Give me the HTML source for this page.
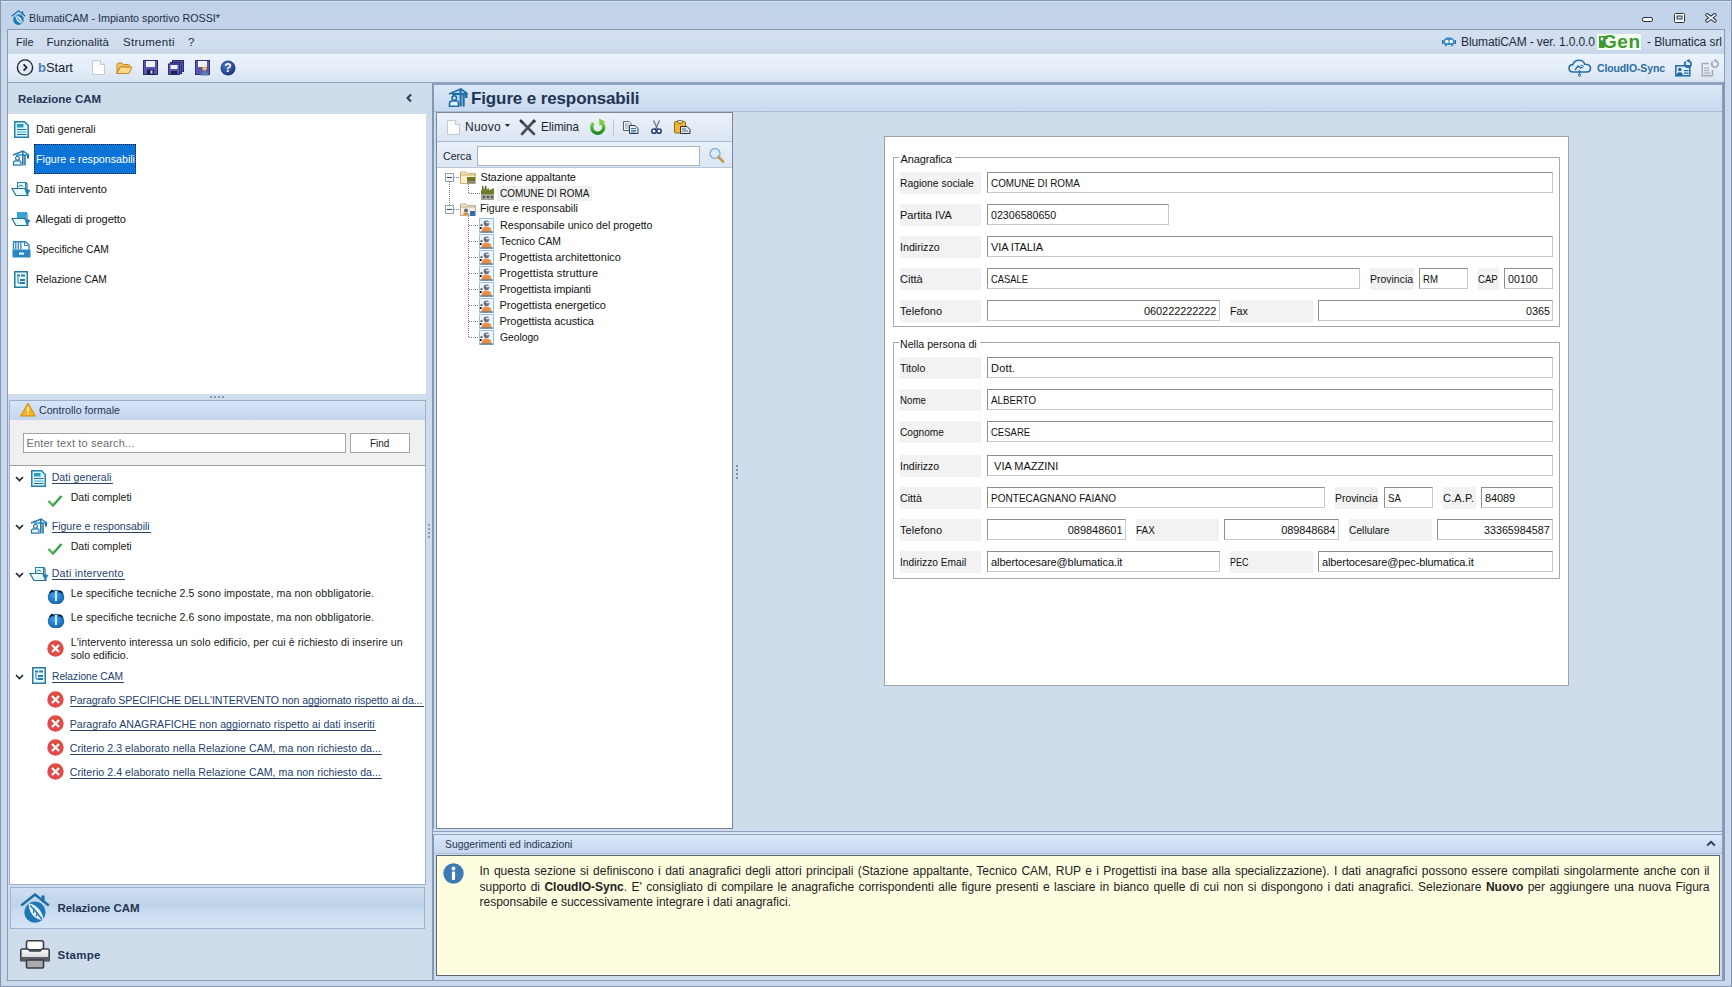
<!DOCTYPE html>
<html><head><meta charset="utf-8">
<style>
*{margin:0;padding:0;box-sizing:border-box}
html,body{width:1732px;height:987px;overflow:hidden;font-family:"Liberation Sans",sans-serif;font-size:11px;color:#000;background:#c8d7eb}
.a{position:absolute}
.t{position:absolute;white-space:pre}
</style></head><body>
<div class="a" style="left:0px;top:0px;width:1732px;height:987px;background:linear-gradient(#c0d2e9,#c3d4ea 28px,#c9d8ec 40px,#c9d8ec);border:1px solid #8595ab"></div>
<div class="a" style="left:1px;top:1px;width:1730px;height:1px;background:#dce6f2"></div>
<div class="a" style="left:7px;top:29px;width:1718px;height:952px;background:#cfdcec;border:1px solid #8a9bb3"></div>
<div class="a" style="left:8px;top:30px;width:1716px;height:24px;background:linear-gradient(#d4e0f0,#d0ddee 75%,#c9d7ea 80%,#cbd9eb)"></div>
<div class="a" style="left:8px;top:54px;width:1716px;height:28px;background:linear-gradient(#ebf3fd,#e4edf8 50%,#d9e4f2)"></div>
<div class="a" style="left:8px;top:82px;width:1716px;height:1px;background:#8ea1bb"></div>
<div class="t" style="left:29.0px;top:12.6px;font-size:11.5px;line-height:11.5px;color:#1f2d40;transform:scaleX(0.9310);transform-origin:0 0;">BlumatiCAM - Impianto sportivo ROSSI*</div>
<svg class="a" style="left:1640px;top:12px" width="16" height="14" viewBox="0 0 16 14"><rect x="2.5" y="5.5" width="10" height="4" rx="1.5" fill="#fff" stroke="#2a3444" stroke-width="1"/></svg>
<svg class="a" style="left:1672px;top:11px" width="16" height="14" viewBox="0 0 16 14"><rect x="2.5" y="2.5" width="10" height="9" rx="1" fill="#fff" stroke="#2a3444" stroke-width="1"/><rect x="5" y="5" width="5" height="3" fill="#cfdcec" stroke="#2a3444" stroke-width="1"/></svg>
<svg class="a" style="left:1703px;top:11px" width="16" height="14" viewBox="0 0 16 14"><path d="M4 3.8 L11.8 9.8 M11.8 3.8 L4 9.8" stroke="#2a3444" stroke-width="3.6" stroke-linecap="round"/><path d="M4 3.8 L11.8 9.8 M11.8 3.8 L4 9.8" stroke="#fff" stroke-width="1.6" stroke-linecap="round"/></svg>
<div class="t" style="left:15.5px;top:36.5px;font-size:11.5px;line-height:11.5px;color:#1e2b3c;transform:scaleX(0.9444);transform-origin:0 0;">File</div>
<div class="t" style="left:46.5px;top:36.5px;font-size:11.5px;line-height:11.5px;color:#1e2b3c;letter-spacing:0.044px;">Funzionalità</div>
<div class="t" style="left:123.0px;top:36.5px;font-size:11.5px;line-height:11.5px;color:#1e2b3c;letter-spacing:0.285px;">Strumenti</div>
<div class="t" style="left:188.0px;top:36.5px;font-size:11.5px;line-height:11.5px;color:#1e2b3c;">?</div>
<div class="t" style="left:1461.0px;top:36.3px;font-size:12px;line-height:12px;color:#1e2b3c;letter-spacing:-0.113px;">BlumatiCAM - ver. 1.0.0.0</div>
<div class="t" style="left:1647.0px;top:36.3px;font-size:12px;line-height:12px;color:#1e2b3c;letter-spacing:-0.073px;">- Blumatica srl</div>
<div class="a" style="left:1597px;top:34px;width:44px;height:16px;background:#f4fcf0"></div>
<svg class="a" style="left:1598px;top:35px" width="10" height="14" viewBox="0 0 10 14"><path d="M1 1 H9.5 V4 H6.5 V13 H1 Z" fill="#3c9a30"/><circle cx="4.2" cy="3.9" r="1.7" fill="#f4fcf0"/></svg>
<div class="t" style="left:1602.0px;top:32.3px;font-size:19px;line-height:19px;color:#3c9a30;font-weight:bold;letter-spacing:0.523px;">Gen</div>
<div class="t" style="left:38.0px;top:61.3px;font-size:13px;line-height:13px;color:#4a7fb5;font-weight:bold;">b</div>
<div class="t" style="left:46.0px;top:61.3px;font-size:13px;line-height:13px;color:#1c2430;letter-spacing:-0.117px;">Start</div>
<div class="t" style="left:1597.0px;top:63.0px;font-size:10.5px;line-height:10.5px;color:#2d6da3;font-weight:bold;letter-spacing:-0.129px;">CloudIO-Sync</div>
<div class="a" style="left:8px;top:83px;width:418px;height:31px;background:#cfdcec"></div>
<div class="t" style="left:18.0px;top:93.5px;font-size:11.5px;line-height:11.5px;color:#1f3553;font-weight:bold;">Relazione CAM</div>
<svg class="a" style="left:404px;top:93px" width="10" height="10" viewBox="0 0 10 10"><path d="M7 1.5 L3.5 5 L7 8.5" fill="none" stroke="#2a3a50" stroke-width="2"/></svg>
<div class="a" style="left:8px;top:114px;width:418px;height:280px;background:#fff"></div>
<div class="t" style="left:35.5px;top:123.8px;font-size:11px;line-height:11px;color:#111;transform:scaleX(0.9649);transform-origin:0 0;">Dati generali</div>
<div class="a" style="left:34px;top:144px;width:102px;height:30px;background:#0b74d6;border:1px dotted #04203f"></div>
<div class="t" style="left:35.5px;top:153.8px;font-size:11px;line-height:11px;color:#fff;transform:scaleX(0.9694);transform-origin:0 0;">Figure e responsabili</div>
<div class="t" style="left:35.5px;top:183.8px;font-size:11px;line-height:11px;color:#111;letter-spacing:0.033px;">Dati intervento</div>
<div class="t" style="left:35.5px;top:213.8px;font-size:11px;line-height:11px;color:#111;letter-spacing:-0.038px;">Allegati di progetto</div>
<div class="t" style="left:35.5px;top:243.8px;font-size:11px;line-height:11px;color:#111;transform:scaleX(0.9314);transform-origin:0 0;">Specifiche CAM</div>
<div class="t" style="left:35.5px;top:273.8px;font-size:11px;line-height:11px;color:#111;transform:scaleX(0.9264);transform-origin:0 0;">Relazione CAM</div>
<div class="a" style="left:210px;top:396px;width:2px;height:2px;background:#8a9ab0"></div>
<div class="a" style="left:214px;top:396px;width:2px;height:2px;background:#8a9ab0"></div>
<div class="a" style="left:218px;top:396px;width:2px;height:2px;background:#8a9ab0"></div>
<div class="a" style="left:222px;top:396px;width:2px;height:2px;background:#8a9ab0"></div>
<div class="a" style="left:9px;top:400px;width:417px;height:485px;background:#fff;border:1px solid #9bb0ca"></div>
<div class="a" style="left:10px;top:401px;width:415px;height:19px;background:linear-gradient(#d7e5f7,#c3d5ed)"></div>
<div class="t" style="left:39.0px;top:404.6px;font-size:11.5px;line-height:11.5px;color:#1f3553;transform:scaleX(0.9249);transform-origin:0 0;">Controllo formale</div>
<div class="a" style="left:10px;top:420px;width:415px;height:45px;background:#f0f0f0"></div>
<div class="a" style="left:10px;top:465px;width:415px;height:1px;background:#a0a0a0"></div>
<div class="a" style="left:23px;top:433px;width:323px;height:20px;background:#fff;border:1px solid #a5a5a5"></div>
<div class="t" style="left:26.5px;top:437.8px;font-size:11px;line-height:11px;color:#6d6d6d;letter-spacing:0.156px;">Enter text to search...</div>
<div class="a" style="left:350px;top:433px;width:60px;height:20px;background:#fff;border:1px solid #a5a5a5"></div>
<div class="t" style="left:369.7px;top:437.8px;font-size:11px;line-height:11px;color:#222;transform:scaleX(0.9016);transform-origin:0 0;">Find</div>
<div class="t" style="left:51.7px;top:472.0px;font-size:10.6px;line-height:10.6px;color:#253f6e;letter-spacing:0.018px;">Dati generali</div>
<div class="a" style="left:52px;top:482.5px;width:61px;height:1px;background:#2a4268"></div>
<div class="t" style="left:70.7px;top:492.0px;font-size:10.6px;line-height:10.6px;color:#1a1a1a;letter-spacing:-0.020px;">Dati completi</div>
<div class="t" style="left:51.7px;top:521.0px;font-size:10.6px;line-height:10.6px;color:#253f6e;letter-spacing:-0.017px;">Figure e responsabili</div>
<div class="a" style="left:52px;top:531.5px;width:99px;height:1px;background:#2a4268"></div>
<div class="t" style="left:70.7px;top:541.0px;font-size:10.6px;line-height:10.6px;color:#1a1a1a;letter-spacing:-0.020px;">Dati completi</div>
<div class="t" style="left:51.7px;top:568.0px;font-size:10.6px;line-height:10.6px;color:#253f6e;letter-spacing:0.242px;">Dati intervento</div>
<div class="a" style="left:52px;top:578.5px;width:73px;height:1px;background:#2a4268"></div>
<div class="t" style="left:70.7px;top:588.0px;font-size:10.6px;line-height:10.6px;color:#1a1a1a;letter-spacing:0.076px;">Le specifiche tecniche 2.5 sono impostate, ma non obbligatorie.</div>
<div class="t" style="left:70.7px;top:612.0px;font-size:10.6px;line-height:10.6px;color:#1a1a1a;letter-spacing:0.076px;">Le specifiche tecniche 2.6 sono impostate, ma non obbligatorie.</div>
<div class="t" style="left:70.7px;top:637.0px;font-size:10.6px;line-height:10.6px;color:#1a1a1a;letter-spacing:0.082px;">L&#x27;intervento interessa un solo edificio, per cui è richiesto di inserire un</div>
<div class="t" style="left:70.7px;top:650.0px;font-size:10.6px;line-height:10.6px;color:#1a1a1a;letter-spacing:-0.023px;">solo edificio.</div>
<div class="t" style="left:51.7px;top:671.0px;font-size:10.6px;line-height:10.6px;color:#253f6e;transform:scaleX(0.9646);transform-origin:0 0;">Relazione CAM</div>
<div class="a" style="left:52px;top:681.5px;width:72px;height:1px;background:#2a4268"></div>
<div class="t" style="left:69.7px;top:695.0px;font-size:10.6px;line-height:10.6px;color:#253f6e;letter-spacing:-0.085px;">Paragrafo SPECIFICHE DELL&#x27;INTERVENTO non aggiornato rispetto ai da...</div>
<div class="a" style="left:70px;top:705.5px;width:354px;height:1px;background:#2a4268"></div>
<div class="t" style="left:69.7px;top:719.0px;font-size:10.6px;line-height:10.6px;color:#253f6e;letter-spacing:0.058px;">Paragrafo ANAGRAFICHE non aggiornato rispetto ai dati inseriti</div>
<div class="a" style="left:70px;top:729.5px;width:306px;height:1px;background:#2a4268"></div>
<div class="t" style="left:69.7px;top:743.0px;font-size:10.6px;line-height:10.6px;color:#253f6e;letter-spacing:0.051px;">Criterio 2.3 elaborato nella Relazione CAM, ma non richiesto da...</div>
<div class="a" style="left:70px;top:753.5px;width:312px;height:1px;background:#2a4268"></div>
<div class="t" style="left:69.7px;top:767.0px;font-size:10.6px;line-height:10.6px;color:#253f6e;letter-spacing:0.051px;">Criterio 2.4 elaborato nella Relazione CAM, ma non richiesto da...</div>
<div class="a" style="left:70px;top:777.5px;width:312px;height:1px;background:#2a4268"></div>
<div class="a" style="left:10px;top:887px;width:415px;height:42px;background:linear-gradient(#cfdef1,#bfd3ea 45%,#c8daf0 55%,#d6e4f4);border:1px solid #9eb3cd"></div>
<div class="t" style="left:57.5px;top:902.5px;font-size:11.5px;line-height:11.5px;color:#1f3553;font-weight:bold;letter-spacing:-0.090px;">Relazione CAM</div>
<div class="t" style="left:57.5px;top:949.5px;font-size:11.5px;line-height:11.5px;color:#1f3553;font-weight:bold;letter-spacing:0.291px;">Stampe</div>
<div class="a" style="left:432px;top:82px;width:2px;height:898px;background:#8199b8"></div>
<div class="a" style="left:432px;top:82px;width:1292px;height:3px;background:#8ea2bd"></div>
<div class="a" style="left:434px;top:85px;width:1288px;height:26px;background:linear-gradient(#dae7f7,#c9d9ee)"></div>
<div class="a" style="left:434px;top:111px;width:1288px;height:1px;background:#a9bbd3"></div>
<div class="t" style="left:471.0px;top:90.3px;font-size:17px;line-height:17px;color:#1f3553;font-weight:bold;letter-spacing:-0.125px;">Figure e responsabili</div>
<div class="a" style="left:1722px;top:82px;width:3px;height:898px;background:#8799b5"></div>
<div class="a" style="left:436px;top:112px;width:297px;height:717px;background:#fff;border:1px solid #7b8797"></div>
<div class="a" style="left:437px;top:113px;width:295px;height:28px;background:linear-gradient(#ecf2fa,#dbe6f3)"></div>
<div class="a" style="left:437px;top:141px;width:295px;height:1px;background:#a8b9d0"></div>
<div class="a" style="left:437px;top:142px;width:295px;height:25px;background:linear-gradient(#e9f0f8,#dce7f3)"></div>
<div class="a" style="left:437px;top:167px;width:295px;height:1px;background:#b8c6d8"></div>
<div class="t" style="left:465.0px;top:121.3px;font-size:12px;line-height:12px;color:#1c2430;letter-spacing:0.253px;">Nuovo</div>
<div class="t" style="left:540.6px;top:121.3px;font-size:12px;line-height:12px;color:#1c2430;transform:scaleX(0.9655);transform-origin:0 0;">Elimina</div>
<div class="a" style="left:613px;top:119px;width:1px;height:17px;background:#b9c7d9"></div>
<div class="t" style="left:442.7px;top:150.8px;font-size:11px;line-height:11px;color:#1c2430;transform:scaleX(0.9644);transform-origin:0 0;">Cerca</div>
<div class="a" style="left:477px;top:146px;width:223px;height:20px;background:#fff;border:1px solid #a9b3c0"></div>
<div class="a" style="left:497px;top:186px;width:95px;height:15px;background:#f0f0f0"></div>
<div class="t" style="left:480.4px;top:171.8px;font-size:11px;line-height:11px;color:#111;letter-spacing:-0.092px;">Stazione appaltante</div>
<div class="t" style="left:499.5px;top:187.8px;font-size:11px;line-height:11px;color:#111;transform:scaleX(0.9020);transform-origin:0 0;">COMUNE DI ROMA</div>
<div class="t" style="left:480.4px;top:202.8px;font-size:11px;line-height:11px;color:#111;transform:scaleX(0.9586);transform-origin:0 0;">Figure e responsabili</div>
<div class="t" style="left:499.5px;top:219.8px;font-size:11px;line-height:11px;color:#111;transform:scaleX(0.9703);transform-origin:0 0;">Responsabile unico del progetto</div>
<div class="t" style="left:499.5px;top:235.8px;font-size:11px;line-height:11px;color:#111;transform:scaleX(0.9414);transform-origin:0 0;">Tecnico CAM</div>
<div class="t" style="left:499.5px;top:251.8px;font-size:11px;line-height:11px;color:#111;letter-spacing:0.017px;">Progettista architettonico</div>
<div class="t" style="left:499.5px;top:267.8px;font-size:11px;line-height:11px;color:#111;letter-spacing:0.135px;">Progettista strutture</div>
<div class="t" style="left:499.5px;top:283.8px;font-size:11px;line-height:11px;color:#111;letter-spacing:-0.108px;">Progettista impianti</div>
<div class="t" style="left:499.5px;top:299.8px;font-size:11px;line-height:11px;color:#111;letter-spacing:-0.025px;">Progettista energetico</div>
<div class="t" style="left:499.5px;top:315.8px;font-size:11px;line-height:11px;color:#111;letter-spacing:-0.079px;">Progettista acustica</div>
<div class="t" style="left:499.5px;top:331.8px;font-size:11px;line-height:11px;color:#111;transform:scaleX(0.9328);transform-origin:0 0;">Geologo</div>
<div class="a" style="left:884px;top:136px;width:685px;height:550px;background:#fff;border:1px solid #a3a3a3"></div>
<div class="a" style="left:893px;top:157px;width:667px;height:170px;border:1px solid #a8a8a8"></div>
<div class="a" style="left:899px;top:154px;width:56px;height:6px;background:#fff"></div>
<div class="t" style="left:900.5px;top:153.8px;font-size:11px;line-height:11px;color:#111;letter-spacing:-0.122px;">Anagrafica</div>
<div class="a" style="left:893px;top:342px;width:667px;height:237px;border:1px solid #a8a8a8"></div>
<div class="a" style="left:899px;top:339px;width:81px;height:6px;background:#fff"></div>
<div class="t" style="left:900.0px;top:338.8px;font-size:11px;line-height:11px;color:#111;transform:scaleX(0.9648);transform-origin:0 0;">Nella persona di</div>
<div class="a" style="left:900px;top:172px;width:81px;height:22px;background:#f2f2f2"></div>
<div class="t" style="left:900.0px;top:177.8px;font-size:11px;line-height:11px;color:#111;transform:scaleX(0.9415);transform-origin:0 0;">Ragione sociale</div>
<div class="a" style="left:987px;top:172px;width:566px;height:21px;background:#fff;border:1px solid #c9c9c9;border-top-color:#8f8f8f;border-left-color:#8f8f8f"></div>
<div class="t" style="left:991.0px;top:177.8px;font-size:11px;line-height:11px;color:#111;transform:scaleX(0.8970);transform-origin:0 0;">COMUNE DI ROMA</div>
<div class="a" style="left:900px;top:204px;width:81px;height:22px;background:#f2f2f2"></div>
<div class="t" style="left:900.0px;top:209.8px;font-size:11px;line-height:11px;color:#111;letter-spacing:0.013px;">Partita IVA</div>
<div class="a" style="left:987px;top:204px;width:182px;height:21px;background:#fff;border:1px solid #c9c9c9;border-top-color:#8f8f8f;border-left-color:#8f8f8f"></div>
<div class="t" style="left:991.0px;top:209.8px;font-size:11px;line-height:11px;color:#111;transform:scaleX(0.9688);transform-origin:0 0;">02306580650</div>
<div class="a" style="left:900px;top:236px;width:81px;height:22px;background:#f2f2f2"></div>
<div class="t" style="left:900.0px;top:241.8px;font-size:11px;line-height:11px;color:#111;transform:scaleX(0.9690);transform-origin:0 0;">Indirizzo</div>
<div class="a" style="left:987px;top:236px;width:566px;height:21px;background:#fff;border:1px solid #c9c9c9;border-top-color:#8f8f8f;border-left-color:#8f8f8f"></div>
<div class="t" style="left:991.0px;top:241.8px;font-size:11px;line-height:11px;color:#111;letter-spacing:-0.111px;">VIA ITALIA</div>
<div class="a" style="left:900px;top:268px;width:81px;height:22px;background:#f2f2f2"></div>
<div class="t" style="left:900.0px;top:273.8px;font-size:11px;line-height:11px;color:#111;letter-spacing:0.019px;">Città</div>
<div class="a" style="left:987px;top:268px;width:373px;height:21px;background:#fff;border:1px solid #c9c9c9;border-top-color:#8f8f8f;border-left-color:#8f8f8f"></div>
<div class="t" style="left:991.0px;top:273.8px;font-size:11px;line-height:11px;color:#111;transform:scaleX(0.8521);transform-origin:0 0;">CASALE</div>
<div class="a" style="left:1370px;top:268px;width:44px;height:22px;background:#f2f2f2"></div>
<div class="t" style="left:1370.0px;top:273.8px;font-size:11px;line-height:11px;color:#111;transform:scaleX(0.9525);transform-origin:0 0;">Provincia</div>
<div class="a" style="left:1419px;top:268px;width:49px;height:21px;background:#fff;border:1px solid #c9c9c9;border-top-color:#8f8f8f;border-left-color:#8f8f8f"></div>
<div class="t" style="left:1423.0px;top:273.8px;font-size:11px;line-height:11px;color:#111;transform:scaleX(0.8767);transform-origin:0 0;">RM</div>
<div class="a" style="left:1478px;top:268px;width:21px;height:22px;background:#f2f2f2"></div>
<div class="t" style="left:1478.0px;top:273.8px;font-size:11px;line-height:11px;color:#111;transform:scaleX(0.8707);transform-origin:0 0;">CAP</div>
<div class="a" style="left:1504px;top:268px;width:49px;height:21px;background:#fff;border:1px solid #c9c9c9;border-top-color:#8f8f8f;border-left-color:#8f8f8f"></div>
<div class="t" style="left:1508.0px;top:273.8px;font-size:11px;line-height:11px;color:#111;transform:scaleX(0.9708);transform-origin:0 0;">00100</div>
<div class="a" style="left:900px;top:300px;width:81px;height:22px;background:#f2f2f2"></div>
<div class="t" style="left:900.0px;top:305.8px;font-size:11px;line-height:11px;color:#111;letter-spacing:0.087px;">Telefono</div>
<div class="a" style="left:987px;top:300px;width:233px;height:21px;background:#fff;border:1px solid #c9c9c9;border-top-color:#8f8f8f;border-left-color:#8f8f8f"></div>
<div class="t" style="left:1144.0px;top:305.8px;font-size:11px;line-height:11px;color:#111;letter-spacing:-0.084px;">060222222222</div>
<div class="a" style="left:1230px;top:300px;width:83px;height:22px;background:#f2f2f2"></div>
<div class="t" style="left:1230.0px;top:305.8px;font-size:11px;line-height:11px;color:#111;transform:scaleX(0.9813);transform-origin:0 0;">Fax</div>
<div class="a" style="left:1318px;top:300px;width:235px;height:21px;background:#fff;border:1px solid #c9c9c9;border-top-color:#8f8f8f;border-left-color:#8f8f8f"></div>
<div class="t" style="left:1525.5px;top:305.8px;font-size:11px;line-height:11px;color:#111;transform:scaleX(0.9802);transform-origin:0 0;">0365</div>
<div class="a" style="left:900px;top:357px;width:81px;height:22px;background:#f2f2f2"></div>
<div class="t" style="left:900.0px;top:362.8px;font-size:11px;line-height:11px;color:#111;transform:scaleX(0.9547);transform-origin:0 0;">Titolo</div>
<div class="a" style="left:987px;top:357px;width:566px;height:21px;background:#fff;border:1px solid #c9c9c9;border-top-color:#8f8f8f;border-left-color:#8f8f8f"></div>
<div class="t" style="left:991.0px;top:362.8px;font-size:11px;line-height:11px;color:#111;letter-spacing:0.191px;">Dott.</div>
<div class="a" style="left:900px;top:389px;width:81px;height:22px;background:#f2f2f2"></div>
<div class="t" style="left:900.0px;top:394.8px;font-size:11px;line-height:11px;color:#111;transform:scaleX(0.8860);transform-origin:0 0;">Nome</div>
<div class="a" style="left:987px;top:389px;width:566px;height:21px;background:#fff;border:1px solid #c9c9c9;border-top-color:#8f8f8f;border-left-color:#8f8f8f"></div>
<div class="t" style="left:991.0px;top:394.8px;font-size:11px;line-height:11px;color:#111;transform:scaleX(0.8851);transform-origin:0 0;">ALBERTO</div>
<div class="a" style="left:900px;top:421px;width:81px;height:22px;background:#f2f2f2"></div>
<div class="t" style="left:900.0px;top:426.8px;font-size:11px;line-height:11px;color:#111;transform:scaleX(0.9203);transform-origin:0 0;">Cognome</div>
<div class="a" style="left:987px;top:421px;width:566px;height:21px;background:#fff;border:1px solid #c9c9c9;border-top-color:#8f8f8f;border-left-color:#8f8f8f"></div>
<div class="t" style="left:991.0px;top:426.8px;font-size:11px;line-height:11px;color:#111;transform:scaleX(0.8641);transform-origin:0 0;">CESARE</div>
<div class="a" style="left:900px;top:455px;width:81px;height:22px;background:#f2f2f2"></div>
<div class="t" style="left:900.0px;top:460.8px;font-size:11px;line-height:11px;color:#111;transform:scaleX(0.9568);transform-origin:0 0;">Indirizzo</div>
<div class="a" style="left:987px;top:455px;width:566px;height:21px;background:#fff;border:1px solid #c9c9c9;border-top-color:#8f8f8f;border-left-color:#8f8f8f"></div>
<div class="t" style="left:991.0px;top:460.8px;font-size:11px;line-height:11px;color:#111;"> VIA MAZZINI</div>
<div class="a" style="left:900px;top:487px;width:81px;height:22px;background:#f2f2f2"></div>
<div class="t" style="left:900.0px;top:492.8px;font-size:11px;line-height:11px;color:#111;transform:scaleX(0.9724);transform-origin:0 0;">Città</div>
<div class="a" style="left:987px;top:487px;width:338px;height:21px;background:#fff;border:1px solid #c9c9c9;border-top-color:#8f8f8f;border-left-color:#8f8f8f"></div>
<div class="t" style="left:991.0px;top:492.8px;font-size:11px;line-height:11px;color:#111;transform:scaleX(0.9129);transform-origin:0 0;">PONTECAGNANO FAIANO</div>
<div class="a" style="left:1335px;top:487px;width:43px;height:22px;background:#f2f2f2"></div>
<div class="t" style="left:1335.0px;top:492.8px;font-size:11px;line-height:11px;color:#111;transform:scaleX(0.9436);transform-origin:0 0;">Provincia</div>
<div class="a" style="left:1384px;top:487px;width:49px;height:21px;background:#fff;border:1px solid #c9c9c9;border-top-color:#8f8f8f;border-left-color:#8f8f8f"></div>
<div class="t" style="left:1388.0px;top:492.8px;font-size:11px;line-height:11px;color:#111;transform:scaleX(0.8715);transform-origin:0 0;">SA</div>
<div class="a" style="left:1443px;top:487px;width:33px;height:22px;background:#f2f2f2"></div>
<div class="t" style="left:1443.0px;top:492.8px;font-size:11px;line-height:11px;color:#111;letter-spacing:0.145px;">C.A.P.</div>
<div class="a" style="left:1481px;top:487px;width:72px;height:21px;background:#fff;border:1px solid #c9c9c9;border-top-color:#8f8f8f;border-left-color:#8f8f8f"></div>
<div class="t" style="left:1485.0px;top:492.8px;font-size:11px;line-height:11px;color:#111;letter-spacing:-0.148px;">84089</div>
<div class="a" style="left:900px;top:519px;width:81px;height:22px;background:#f2f2f2"></div>
<div class="t" style="left:900.0px;top:524.8px;font-size:11px;line-height:11px;color:#111;letter-spacing:0.087px;">Telefono</div>
<div class="a" style="left:987px;top:519px;width:139px;height:21px;background:#fff;border:1px solid #c9c9c9;border-top-color:#8f8f8f;border-left-color:#8f8f8f"></div>
<div class="t" style="left:1067.8px;top:524.8px;font-size:11px;line-height:11px;color:#111;letter-spacing:-0.045px;">089848601</div>
<div class="a" style="left:1136px;top:519px;width:83px;height:22px;background:#f2f2f2"></div>
<div class="t" style="left:1136.0px;top:524.8px;font-size:11px;line-height:11px;color:#111;transform:scaleX(0.9040);transform-origin:0 0;">FAX</div>
<div class="a" style="left:1224px;top:519px;width:115px;height:21px;background:#fff;border:1px solid #c9c9c9;border-top-color:#8f8f8f;border-left-color:#8f8f8f"></div>
<div class="t" style="left:1281.2px;top:524.8px;font-size:11px;line-height:11px;color:#111;letter-spacing:-0.095px;">089848684</div>
<div class="a" style="left:1349px;top:519px;width:83px;height:22px;background:#f2f2f2"></div>
<div class="t" style="left:1349.0px;top:524.8px;font-size:11px;line-height:11px;color:#111;transform:scaleX(0.9327);transform-origin:0 0;">Cellulare</div>
<div class="a" style="left:1437px;top:519px;width:116px;height:21px;background:#fff;border:1px solid #c9c9c9;border-top-color:#8f8f8f;border-left-color:#8f8f8f"></div>
<div class="t" style="left:1483.9px;top:524.8px;font-size:11px;line-height:11px;color:#111;transform:scaleX(0.9748);transform-origin:0 0;">33365984587</div>
<div class="a" style="left:900px;top:551px;width:81px;height:22px;background:#f2f2f2"></div>
<div class="t" style="left:900.0px;top:556.8px;font-size:11px;line-height:11px;color:#111;transform:scaleX(0.9269);transform-origin:0 0;">Indirizzo Email</div>
<div class="a" style="left:987px;top:551px;width:233px;height:21px;background:#fff;border:1px solid #c9c9c9;border-top-color:#8f8f8f;border-left-color:#8f8f8f"></div>
<div class="t" style="left:991.0px;top:556.8px;font-size:11px;line-height:11px;color:#111;letter-spacing:-0.086px;">albertocesare@blumatica.it</div>
<div class="a" style="left:1230px;top:551px;width:83px;height:22px;background:#f2f2f2"></div>
<div class="t" style="left:1230.0px;top:556.8px;font-size:11px;line-height:11px;color:#111;transform:scaleX(0.8133);transform-origin:0 0;">PEC</div>
<div class="a" style="left:1318px;top:551px;width:235px;height:21px;background:#fff;border:1px solid #c9c9c9;border-top-color:#8f8f8f;border-left-color:#8f8f8f"></div>
<div class="t" style="left:1322.0px;top:556.8px;font-size:11px;line-height:11px;color:#111;letter-spacing:-0.109px;">albertocesare@pec-blumatica.it</div>
<div class="a" style="left:433px;top:829px;width:1289px;height:2px;background:#cfdcec"></div>
<div class="a" style="left:433px;top:831px;width:1289px;height:1px;background:#8ea2bd"></div>
<div class="a" style="left:433px;top:832px;width:1289px;height:2px;background:#d6e3f5"></div>
<div class="a" style="left:433px;top:834px;width:1289px;height:1px;background:#95a9c3"></div>
<div class="a" style="left:434px;top:835px;width:1288px;height:18px;background:linear-gradient(#d9e6f7,#c6d8ee)"></div>
<div class="a" style="left:434px;top:853px;width:1288px;height:1px;background:#aabdd6"></div>
<div class="t" style="left:444.8px;top:838.8px;font-size:11px;line-height:11px;color:#243650;transform:scaleX(0.9462);transform-origin:0 0;">Suggerimenti ed indicazioni</div>
<svg class="a" style="left:1705px;top:838px" width="12" height="10" viewBox="0 0 12 10"><path d="M2.2 7.5 L6 3.8 L9.8 7.5" fill="none" stroke="#2a3a50" stroke-width="1.8"/></svg>
<div class="a" style="left:436px;top:855px;width:1284px;height:121px;background:#fffde0;border:1px solid #5f6670"></div>
<svg class="a" style="left:11px;top:10px" width="15" height="15" viewBox="0 0 30 30"><path d="M1.2 12.5 L15 1.5 L28.8 12.5" fill="none" stroke="#1b6ea6" stroke-width="2.4" stroke-linejoin="miter"/><rect x="21.5" y="2.5" width="3" height="6" fill="#1b6ea6"/><circle cx="15" cy="19.2" r="10.6" fill="#1f78b6"/><path d="M8.5 10.5 C14 11 22 15 23.5 27 C17 27.5 9 22 8.5 10.5 Z" fill="#e6f3fb"/><path d="M10 12.5 C14 16 18 21 22 26.5" fill="none" stroke="#1f78b6" stroke-width="1.6"/><path d="M14 15.5 L13.5 20 M17.5 19.5 L16 23.5" stroke="#1f78b6" stroke-width="1.2"/></svg>
<svg class="a" style="left:20px;top:893px" width="30" height="30" viewBox="0 0 30 30"><path d="M1.2 12.5 L15 1.5 L28.8 12.5" fill="none" stroke="#1b6ea6" stroke-width="2.4" stroke-linejoin="miter"/><rect x="21.5" y="2.5" width="3" height="6" fill="#1b6ea6"/><circle cx="15" cy="19.2" r="10.6" fill="#1f78b6"/><path d="M8.5 10.5 C14 11 22 15 23.5 27 C17 27.5 9 22 8.5 10.5 Z" fill="#e6f3fb"/><path d="M10 12.5 C14 16 18 21 22 26.5" fill="none" stroke="#1f78b6" stroke-width="1.6"/><path d="M14 15.5 L13.5 20 M17.5 19.5 L16 23.5" stroke="#1f78b6" stroke-width="1.2"/></svg>
<svg class="a" style="left:1442px;top:36px" width="14" height="12" viewBox="0 0 14 12"><rect x="1.5" y="1.5" width="11" height="9" rx="4.5" fill="#3a8ac8"/><circle cx="4.8" cy="5.5" r="1.8" fill="#fff"/><circle cx="9.2" cy="5.5" r="1.8" fill="#fff"/><rect x="0" y="4" width="1.5" height="4" fill="#2a6aa0"/><rect x="12.5" y="4" width="1.5" height="4" fill="#2a6aa0"/><rect x="5" y="9" width="4" height="1.5" fill="#fff"/></svg>
<svg class="a" style="left:16px;top:58px" width="18" height="18" viewBox="0 0 18 18"><circle cx="9" cy="9.5" r="7.6" fill="none" stroke="#1d2530" stroke-width="1.4"/><path d="M7.6 6.3 L10.6 9.5 L7.6 12.7" fill="none" stroke="#1d2530" stroke-width="1.8"/></svg>
<svg class="a" style="left:92px;top:60px" width="13" height="15" viewBox="0 0 13 15"><path d="M0.5 0.5 H8.5 L12.5 4.5 V14.5 H0.5 Z" fill="#fdfdfd" stroke="#c4c8cf"/><path d="M8.5 0.5 V4.5 H12.5" fill="#eceef2" stroke="#c4c8cf"/></svg>
<svg class="a" style="left:116px;top:62px" width="17" height="13" viewBox="0 0 17 13"><path d="M1 2.5 Q1 1 2.5 1 H6 L7.5 2.5 H12.5 Q13.5 2.5 13.5 3.5 V5 H4 L1 11.5 Z" fill="#f3c36a" stroke="#c48a22" stroke-width="1"/><path d="M1 11.5 L4 5 H16 L13 11.5 Z" fill="#fbd88a" stroke="#c48a22" stroke-width="1"/></svg>
<svg class="a" style="left:143px;top:60px" width="15" height="15" viewBox="0 0 15 15"><rect x="0.5" y="0.5" width="14" height="14" fill="#5656b4" stroke="#2a2a70"/><rect x="3" y="1" width="9" height="6" fill="#f0f2fa"/><rect x="4" y="9.5" width="7" height="5" fill="#20204a"/><rect x="7.5" y="10.5" width="2" height="3" fill="#e0e4f0"/></svg>
<svg class="a" style="left:168px;top:60px" width="16" height="15" viewBox="0 0 16 15"><rect x="4.5" y="0.5" width="11" height="11" fill="#5a5ab8" stroke="#2a2a70"/><rect x="2.5" y="2.5" width="11" height="11" fill="#5050b0" stroke="#2a2a70"/><rect x="0.5" y="4" width="11" height="10.5" fill="#5656b4" stroke="#33337a"/><rect x="2.5" y="5" width="7" height="4" fill="#eef0fa"/><rect x="3" y="11" width="6" height="3.5" fill="#20204a"/></svg>
<svg class="a" style="left:195px;top:60px" width="15" height="16" viewBox="0 0 15 16"><rect x="0.5" y="0.5" width="14" height="14" fill="#5656b4" stroke="#33337a"/><rect x="3" y="1" width="9" height="6" fill="#f0f2fa"/><circle cx="9.5" cy="8.5" r="2.3" fill="#f2b860"/><path d="M5.5 15.5 Q5.5 11 9.5 11 Q13.5 11 13.5 15.5 Z" fill="#3a80c8"/><path d="M9.5 11 L9.5 15" stroke="#e04040" stroke-width="1.2"/></svg>
<svg class="a" style="left:220px;top:60px" width="16" height="16" viewBox="0 0 16 16"><defs><radialGradient id="hg" cx="40%" cy="35%" r="70%"><stop offset="0" stop-color="#4d78c8"/><stop offset="1" stop-color="#16307a"/></radialGradient></defs><circle cx="8" cy="8" r="7.5" fill="url(#hg)"/><text x="8" y="12.3" text-anchor="middle" font-family="Liberation Sans" font-weight="bold" font-size="12" fill="#fff">?</text></svg>
<svg class="a" style="left:1568px;top:59px" width="24" height="18" viewBox="0 0 24 18"><path d="M5.5 13 Q1 13 1 9.2 Q1 5.8 4.8 5.6 Q6 1.2 11 1.2 Q15.5 1.2 16.8 5.2 Q22.5 5.2 22.5 9.3 Q22.5 13 18.5 13 Z" fill="none" stroke="#2a6da6" stroke-width="1.6"/><path d="M7 11 L10 7 L13 9.5 M11.5 11 L11.5 16" fill="none" stroke="#2a6da6" stroke-width="1.3"/><circle cx="11.5" cy="16.3" r="1.2" fill="none" stroke="#2a6da6" stroke-width="1"/><circle cx="14" cy="7.5" r="1.3" fill="none" stroke="#2a6da6" stroke-width="1"/></svg>
<svg class="a" style="left:1675px;top:59px" width="18" height="18" viewBox="0 0 18 18"><rect x="0.8" y="6.8" width="14" height="10" fill="none" stroke="#1f6aa6" stroke-width="1.5"/><circle cx="4.8" cy="10.5" r="1.8" fill="#1f6aa6"/><path d="M1.8 16.5 Q1.8 13.3 4.8 13.3 Q7.8 13.3 7.8 16.5 Z" fill="#1f6aa6"/><rect x="9" y="11" width="4.5" height="1.2" fill="#1f6aa6"/><rect x="9" y="13.5" width="4.5" height="1.2" fill="#1f6aa6"/><path d="M13 1.8 A3.2 3.2 0 1 1 10.7 2.7" fill="none" stroke="#1f6aa6" stroke-width="1.7"/><path d="M14.5 0 L11 1.8 L14.5 3.6 Z" fill="#1f6aa6"/></svg>
<svg class="a" style="left:1701px;top:59px" width="18" height="18" viewBox="0 0 18 18"><path d="M8 4.5 H1.2 V16.8 H11.5 V11" fill="none" stroke="#a5aab3" stroke-width="1.4"/><rect x="3" y="8.5" width="5" height="1.1" fill="#a5aab3"/><rect x="3" y="11" width="5" height="1.1" fill="#a5aab3"/><rect x="3" y="13.5" width="6.5" height="1.1" fill="#a5aab3"/><path d="M14 1.8 A3.2 3.2 0 1 1 11.7 2.7" fill="none" stroke="#a5aab3" stroke-width="1.7"/><path d="M15.5 0 L12 1.8 L15.5 3.6 Z" fill="#a5aab3"/></svg>
<svg class="a" style="left:14px;top:121px" width="15" height="17" viewBox="0 0 15 17"><path d="M0.75 0.75 H10.5 L14.25 4.5 V16.25 H0.75 Z" fill="#d9f7ff" stroke="#2a80a8" stroke-width="1.5"/><rect x="3" y="3" width="6.5" height="3.5" fill="#1ea0c8"/><rect x="3" y="8" width="9.5" height="1" fill="#2a6f90"/><rect x="3" y="10.3" width="9.5" height="1.6" fill="#7cc8e0"/><rect x="3" y="13" width="9.5" height="1" fill="#2a6f90"/></svg>
<svg class="a" style="left:12px;top:150px" width="18" height="16" viewBox="0 0 18 16"><path d="M1 5 L11 1 L17 5" fill="none" stroke="#2a78a8" stroke-width="1.4"/><path d="M4 5 H16" stroke="#2aa0d0" stroke-width="1.6"/><rect x="15" y="5" width="2" height="3.5" fill="#2a6f9a"/><rect x="10" y="1.5" width="1.6" height="14" fill="#2a78a8"/><rect x="12.2" y="5" width="1.6" height="10.5" fill="#2a78a8"/><circle cx="5.5" cy="8.2" r="1.9" fill="none" stroke="#2a78a8" stroke-width="1.2"/><path d="M1.5 15.2 V13 Q1.5 10.8 3.5 10.8 H7.5 Q9 10.8 9 13 V15.2 Z" fill="#dff6ff" stroke="#2a78a8" stroke-width="1.2"/></svg>
<svg class="a" style="left:11px;top:181px" width="20" height="16" viewBox="0 0 20 16"><rect x="6.5" y="1.5" width="8" height="6.5" fill="#e0fbff" stroke="#2a7fa0"/><path d="M7.5 5.5 L10 4 L12 5.5" stroke="#2a7fa0" fill="none"/><path d="M1 7.5 H14 L17 14.5 H5 Z" fill="#e8fcff" stroke="#2a6f90" stroke-width="1.2"/><path d="M13.5 8 L19.5 9 L16 15 Z" fill="#2a80b8"/><path d="M14.5 1.5 Q16 1.5 16 4 V10" fill="none" stroke="#2a6f90" stroke-width="1.2"/></svg>
<svg class="a" style="left:11px;top:211px" width="20" height="16" viewBox="0 0 20 16"><rect x="6" y="1" width="9" height="7" fill="#35a5d5"/><path d="M1 7.5 H14 L17 14.5 H5 Z" fill="#e8fcff" stroke="#2a6f90" stroke-width="1.2"/><path d="M13.5 8 L19.5 9 L16 15 Z" fill="#2a80b8"/><path d="M14.5 1.5 Q16 1.5 16 4 V10" fill="none" stroke="#2a6f90" stroke-width="1.2"/></svg>
<svg class="a" style="left:12px;top:241px" width="19" height="17" viewBox="0 0 19 17"><path d="M1.5 8.5 V0.8 H13.5 L17 4 V8.5" fill="#fff" stroke="#2a88c0" stroke-width="1.4"/><path d="M3.8 1 V8.5 M6.3 1 V8.5 M8.8 1 V8.5" stroke="#2a88c0" stroke-width="1.3"/><path d="M12.5 1 V4.5 H16.5" fill="none" stroke="#2a88c0" stroke-width="1"/><rect x="0.5" y="8.5" width="18" height="8" fill="#2a88c0"/><rect x="7" y="11.5" width="5" height="2.2" fill="#e8f4fb"/></svg>
<svg class="a" style="left:14px;top:271px" width="14" height="17" viewBox="0 0 14 17"><rect x="0.75" y="0.75" width="12.5" height="15.5" fill="#e6fbff" stroke="#2a7aa0" stroke-width="1.5"/><rect x="3" y="3.5" width="3" height="2" fill="#2a78b0"/><rect x="7" y="3.5" width="4" height="2" fill="#2a78b0"/><path d="M4 6 V12 H6" fill="none" stroke="#2a78b0"/><rect x="6" y="8" width="5" height="2" fill="#2a78b0"/><rect x="6" y="11" width="5" height="2" fill="#2a78b0"/></svg>
<svg class="a" style="left:20px;top:402px" width="16" height="15" viewBox="0 0 16 15"><path d="M8 1 L15.3 14 H0.7 Z" fill="#f5b320" stroke="#d08a10" stroke-width="1"/><path d="M8 5 V10" stroke="#fff6d0" stroke-width="1.6"/><rect x="7.2" y="11" width="1.6" height="1.6" fill="#fff6d0"/></svg>
<svg class="a" style="left:15px;top:476px" width="9" height="6" viewBox="0 0 9 6"><path d="M1 1 L4.5 4.5 L8 1" fill="none" stroke="#1d2530" stroke-width="1.6"/></svg>
<svg class="a" style="left:15px;top:524px" width="9" height="6" viewBox="0 0 9 6"><path d="M1 1 L4.5 4.5 L8 1" fill="none" stroke="#1d2530" stroke-width="1.6"/></svg>
<svg class="a" style="left:15px;top:572px" width="9" height="6" viewBox="0 0 9 6"><path d="M1 1 L4.5 4.5 L8 1" fill="none" stroke="#1d2530" stroke-width="1.6"/></svg>
<svg class="a" style="left:15px;top:674px" width="9" height="6" viewBox="0 0 9 6"><path d="M1 1 L4.5 4.5 L8 1" fill="none" stroke="#1d2530" stroke-width="1.6"/></svg>
<svg class="a" style="left:31px;top:470px" width="15" height="17" viewBox="0 0 15 17"><path d="M0.75 0.75 H10.5 L14.25 4.5 V16.25 H0.75 Z" fill="#d9f7ff" stroke="#2a80a8" stroke-width="1.5"/><rect x="3" y="3" width="6.5" height="3.5" fill="#1ea0c8"/><rect x="3" y="8" width="9.5" height="1" fill="#2a6f90"/><rect x="3" y="10.3" width="9.5" height="1.6" fill="#7cc8e0"/><rect x="3" y="13" width="9.5" height="1" fill="#2a6f90"/></svg>
<svg class="a" style="left:30px;top:518px" width="18" height="16" viewBox="0 0 18 16"><path d="M1 5 L11 1 L17 5" fill="none" stroke="#2a78a8" stroke-width="1.4"/><path d="M4 5 H16" stroke="#2aa0d0" stroke-width="1.6"/><rect x="15" y="5" width="2" height="3.5" fill="#2a6f9a"/><rect x="10" y="1.5" width="1.6" height="14" fill="#2a78a8"/><rect x="12.2" y="5" width="1.6" height="10.5" fill="#2a78a8"/><circle cx="5.5" cy="8.2" r="1.9" fill="none" stroke="#2a78a8" stroke-width="1.2"/><path d="M1.5 15.2 V13 Q1.5 10.8 3.5 10.8 H7.5 Q9 10.8 9 13 V15.2 Z" fill="#dff6ff" stroke="#2a78a8" stroke-width="1.2"/></svg>
<svg class="a" style="left:29px;top:566px" width="20" height="16" viewBox="0 0 20 16"><rect x="6.5" y="1.5" width="8" height="6.5" fill="#e0fbff" stroke="#2a7fa0"/><path d="M7.5 5.5 L10 4 L12 5.5" stroke="#2a7fa0" fill="none"/><path d="M1 7.5 H14 L17 14.5 H5 Z" fill="#e8fcff" stroke="#2a6f90" stroke-width="1.2"/><path d="M13.5 8 L19.5 9 L16 15 Z" fill="#2a80b8"/><path d="M14.5 1.5 Q16 1.5 16 4 V10" fill="none" stroke="#2a6f90" stroke-width="1.2"/></svg>
<svg class="a" style="left:32px;top:667px" width="14" height="17" viewBox="0 0 14 17"><rect x="0.75" y="0.75" width="12.5" height="15.5" fill="#e6fbff" stroke="#2a7aa0" stroke-width="1.5"/><rect x="3" y="3.5" width="3" height="2" fill="#2a78b0"/><rect x="7" y="3.5" width="4" height="2" fill="#2a78b0"/><path d="M4 6 V12 H6" fill="none" stroke="#2a78b0"/><rect x="6" y="8" width="5" height="2" fill="#2a78b0"/><rect x="6" y="11" width="5" height="2" fill="#2a78b0"/></svg>
<svg class="a" style="left:47px;top:494px" width="16" height="13" viewBox="0 0 16 13"><path d="M1.5 7 L6 11.5 L14.5 2" fill="none" stroke="#3aa04a" stroke-width="2.4"/><path d="M1.5 7 L6 11.5" fill="none" stroke="#7ac880" stroke-width="1"/></svg>
<svg class="a" style="left:47px;top:542px" width="16" height="13" viewBox="0 0 16 13"><path d="M1.5 7 L6 11.5 L14.5 2" fill="none" stroke="#3aa04a" stroke-width="2.4"/><path d="M1.5 7 L6 11.5" fill="none" stroke="#7ac880" stroke-width="1"/></svg>
<svg class="a" style="left:47px;top:587px" width="18" height="17" viewBox="0 0 18 17"><defs><radialGradient id="ib" cx="45%" cy="40%" r="65%"><stop offset="0" stop-color="#4aa8f0"/><stop offset="1" stop-color="#0d5aa8"/></radialGradient></defs><ellipse cx="9" cy="10" rx="8.3" ry="7.3" fill="url(#ib)"/><rect x="8" y="4" width="2" height="10" fill="#c8ecff"/><path d="M2.5 6 L5 3.5 L7 5 M11 4.5 H14 L15.5 6.5" fill="none" stroke="#111" stroke-width="1.4"/></svg>
<svg class="a" style="left:47px;top:611px" width="18" height="17" viewBox="0 0 18 17"><defs><radialGradient id="ib" cx="45%" cy="40%" r="65%"><stop offset="0" stop-color="#4aa8f0"/><stop offset="1" stop-color="#0d5aa8"/></radialGradient></defs><ellipse cx="9" cy="10" rx="8.3" ry="7.3" fill="url(#ib)"/><rect x="8" y="4" width="2" height="10" fill="#c8ecff"/><path d="M2.5 6 L5 3.5 L7 5 M11 4.5 H14 L15.5 6.5" fill="none" stroke="#111" stroke-width="1.4"/></svg>
<svg class="a" style="left:47px;top:640px" width="17" height="17" viewBox="0 0 17 17"><circle cx="8.5" cy="8.5" r="8.2" fill="#e24a45"/><path d="M5 5 L12 12 M12 5 L5 12" stroke="#fff" stroke-width="2.3"/></svg>
<svg class="a" style="left:47px;top:691px" width="17" height="17" viewBox="0 0 17 17"><circle cx="8.5" cy="8.5" r="8.2" fill="#e24a45"/><path d="M5 5 L12 12 M12 5 L5 12" stroke="#fff" stroke-width="2.3"/></svg>
<svg class="a" style="left:47px;top:715px" width="17" height="17" viewBox="0 0 17 17"><circle cx="8.5" cy="8.5" r="8.2" fill="#e24a45"/><path d="M5 5 L12 12 M12 5 L5 12" stroke="#fff" stroke-width="2.3"/></svg>
<svg class="a" style="left:47px;top:739px" width="17" height="17" viewBox="0 0 17 17"><circle cx="8.5" cy="8.5" r="8.2" fill="#e24a45"/><path d="M5 5 L12 12 M12 5 L5 12" stroke="#fff" stroke-width="2.3"/></svg>
<svg class="a" style="left:47px;top:763px" width="17" height="17" viewBox="0 0 17 17"><circle cx="8.5" cy="8.5" r="8.2" fill="#e24a45"/><path d="M5 5 L12 12 M12 5 L5 12" stroke="#fff" stroke-width="2.3"/></svg>
<svg class="a" style="left:20px;top:940px" width="30" height="29" viewBox="0 0 30 29"><rect x="6.5" y="0.8" width="17" height="9" rx="2" fill="#fff" stroke="#3a3d44" stroke-width="1.6"/><path d="M2 9 Q0.8 9 0.8 11 V20.5 H29.2 V11 Q29.2 9 28 9 H22 L20 11 H10 L8 9 Z" fill="url(#pg)" stroke="#3a3d44" stroke-width="1.6"/><defs><linearGradient id="pg" x1="0" y1="0" x2="0" y2="1"><stop offset="0" stop-color="#ffffff"/><stop offset="1" stop-color="#c8c9cc"/></linearGradient></defs><rect x="0.8" y="17" width="28.4" height="4.5" fill="#5a5d64"/><rect x="6.5" y="20" width="17" height="8" rx="1" fill="#a8abb0" stroke="#3a3d44" stroke-width="1.6"/></svg>
<svg class="a" style="left:448px;top:88px" width="20" height="19" viewBox="0 0 20 19"><path d="M1 6 L13 1 L19.5 6" fill="none" stroke="#1f6da5" stroke-width="1.8"/><path d="M4 6 H19" stroke="#1f6da5" stroke-width="2.2"/><rect x="17" y="6" width="2.5" height="4" fill="#1f6da5"/><rect x="11.5" y="1.5" width="2.2" height="17" fill="#1f6da5"/><rect x="14.5" y="6" width="2.2" height="12.5" fill="#1f6da5"/><circle cx="6.3" cy="10" r="2.3" fill="none" stroke="#1f6da5" stroke-width="1.6"/><path d="M1.5 18.2 V15.5 Q1.5 13 4 13 H9 Q10.5 13 10.5 15.5 V18.2 Z" fill="#e4f4ff" stroke="#1f6da5" stroke-width="1.6"/></svg>
<svg class="a" style="left:447px;top:120px" width="13" height="15" viewBox="0 0 13 15"><path d="M0.5 0.5 H8.5 L12.5 4.5 V14.5 H0.5 Z" fill="#fdfdfd" stroke="#c4c8cf"/><path d="M8.5 0.5 V4.5 H12.5" fill="#eceef2" stroke="#c4c8cf"/></svg>
<svg class="a" style="left:505px;top:124px" width="6" height="4" viewBox="0 0 6 4"><path d="M0 0 H5 L2.5 3 Z" fill="#1c2430"/></svg>
<svg class="a" style="left:519px;top:119px" width="18" height="17" viewBox="0 0 18 17"><path d="M2 2 L15 15 M15 2 L3 15" stroke="#4a4e55" stroke-width="2.6" stroke-linecap="round"/><path d="M1 1 L4 4 M14 1 L16.5 3" stroke="#2f3238" stroke-width="2"/></svg>
<svg class="a" style="left:589px;top:118px" width="17" height="17" viewBox="0 0 17 17"><defs><linearGradient id="rg" x1="0" y1="0" x2="0" y2="1"><stop offset="0" stop-color="#8ad84a"/><stop offset="1" stop-color="#1c8a1e"/></linearGradient></defs><path d="M4.5 5 A6 6 0 1 0 12 4.2" fill="none" stroke="url(#rg)" stroke-width="3.4"/><path d="M10 0.5 L16 3.5 L10.5 8 Z" fill="#7ccc40"/></svg>
<svg class="a" style="left:623px;top:121px" width="16" height="13" viewBox="0 0 16 13"><path d="M0.5 0.5 H6 L8 2.5 V9.5 H0.5 Z" fill="#f8f9fb" stroke="#5a6070"/><path d="M2 3 H6 M2 5 H6 M2 7 H6" stroke="#8a92a0"/><path d="M6.5 4.5 H12 L15 7.5 V12.5 H6.5 Z" fill="#eaf4fc" stroke="#2a3a5a"/><path d="M8 7.5 H13 M8 9.5 H13 M8 11 H13" stroke="#3a6aa0" stroke-width="1"/></svg>
<svg class="a" style="left:651px;top:120px" width="11" height="14" viewBox="0 0 11 14"><path d="M2.5 0.5 L6.5 9 M8.5 0.5 L4.5 9" stroke="#6a7080" stroke-width="1.2"/><circle cx="3" cy="11.2" r="2.2" fill="#fff" stroke="#1e3e7a" stroke-width="1.6"/><circle cx="8" cy="11.2" r="2.2" fill="#fff" stroke="#1e3e7a" stroke-width="1.6"/></svg>
<svg class="a" style="left:674px;top:120px" width="17" height="14" viewBox="0 0 17 14"><rect x="0.5" y="1.5" width="11" height="11.5" rx="1" fill="#f0b828" stroke="#8a6a20"/><rect x="3.5" y="0.3" width="5" height="3" rx="1" fill="#e8e2c8" stroke="#6a5a30"/><path d="M6.5 6.5 H13 L16 9.5 V13.5 H6.5 Z" fill="#e4e6ea" stroke="#2a3440"/><path d="M8 9 H12 M8 11 H14" stroke="#5a6a80"/></svg>
<svg class="a" style="left:708px;top:147px" width="17" height="17" viewBox="0 0 17 17"><circle cx="7" cy="6.5" r="5" fill="#d8ecfa" stroke="#8ab0d8" stroke-width="1.4"/><path d="M10.5 10 L15 14.5" stroke="#c89850" stroke-width="2.6" stroke-linecap="round"/></svg>
<svg class="a" style="left:445px;top:173px" width="9" height="9" viewBox="0 0 9 9"><rect x="0.5" y="0.5" width="8" height="8" fill="#f4f6f8" stroke="#9aa0a8"/><path d="M2 4.5 H7" stroke="#3a4a60" stroke-width="1"/></svg>
<svg class="a" style="left:445px;top:205px" width="9" height="9" viewBox="0 0 9 9"><rect x="0.5" y="0.5" width="8" height="8" fill="#f4f6f8" stroke="#9aa0a8"/><path d="M2 4.5 H7" stroke="#3a4a60" stroke-width="1"/></svg>
<div class="a" style="left:449px;top:182px;width:1px;height:23px;background:repeating-linear-gradient(180deg,#7a7a7a 0 1px,transparent 1px 2px)"></div>
<div class="a" style="left:454px;top:177px;width:7px;height:1px;background:repeating-linear-gradient(90deg,#7a7a7a 0 1px,transparent 1px 2px)"></div>
<div class="a" style="left:454px;top:209px;width:7px;height:1px;background:repeating-linear-gradient(90deg,#7a7a7a 0 1px,transparent 1px 2px)"></div>
<div class="a" style="left:468px;top:184px;width:1px;height:9px;background:repeating-linear-gradient(180deg,#7a7a7a 0 1px,transparent 1px 2px)"></div>
<div class="a" style="left:469px;top:193px;width:11px;height:1px;background:repeating-linear-gradient(90deg,#7a7a7a 0 1px,transparent 1px 2px)"></div>
<div class="a" style="left:468px;top:216px;width:1px;height:121px;background:repeating-linear-gradient(180deg,#7a7a7a 0 1px,transparent 1px 2px)"></div>
<div class="a" style="left:469px;top:225px;width:11px;height:1px;background:repeating-linear-gradient(90deg,#7a7a7a 0 1px,transparent 1px 2px)"></div>
<div class="a" style="left:469px;top:241px;width:11px;height:1px;background:repeating-linear-gradient(90deg,#7a7a7a 0 1px,transparent 1px 2px)"></div>
<div class="a" style="left:469px;top:257px;width:11px;height:1px;background:repeating-linear-gradient(90deg,#7a7a7a 0 1px,transparent 1px 2px)"></div>
<div class="a" style="left:469px;top:273px;width:11px;height:1px;background:repeating-linear-gradient(90deg,#7a7a7a 0 1px,transparent 1px 2px)"></div>
<div class="a" style="left:469px;top:289px;width:11px;height:1px;background:repeating-linear-gradient(90deg,#7a7a7a 0 1px,transparent 1px 2px)"></div>
<div class="a" style="left:469px;top:305px;width:11px;height:1px;background:repeating-linear-gradient(90deg,#7a7a7a 0 1px,transparent 1px 2px)"></div>
<div class="a" style="left:469px;top:321px;width:11px;height:1px;background:repeating-linear-gradient(90deg,#7a7a7a 0 1px,transparent 1px 2px)"></div>
<div class="a" style="left:469px;top:337px;width:11px;height:1px;background:repeating-linear-gradient(90deg,#7a7a7a 0 1px,transparent 1px 2px)"></div>
<svg class="a" style="left:460px;top:170px" width="16" height="14" viewBox="0 0 16 14"><path d="M0.5 2 H6 L7.5 3.5 H15.5 V13.5 H0.5 Z" fill="#f2e6b8" stroke="#c8b478"/><rect x="0.5" y="5" width="15" height="8.5" fill="#f8efc8" stroke="#c8b478"/><rect x="7" y="7" width="8" height="4" fill="#6a7a2a"/><rect x="7" y="11" width="8" height="2.5" fill="#8a8a80"/></svg>
<svg class="a" style="left:460px;top:202px" width="16" height="15" viewBox="0 0 16 15"><path d="M0.5 2 H6 L7.5 3.5 H15.5 V13.5 H0.5 Z" fill="#f0e6d0" stroke="#c0b090"/><rect x="0.5" y="5" width="15" height="8.5" fill="#f6eedc" stroke="#c0b090"/><circle cx="6" cy="8.5" r="2" fill="#5a6a80"/><path d="M3 13 Q3 10.5 6 10.5 Q9 10.5 9 13 Z" fill="#e08a40"/><rect x="10" y="9" width="5" height="5" fill="#2a70c0"/></svg>
<svg class="a" style="left:481px;top:185px" width="13" height="15" viewBox="0 0 13 15"><rect x="1" y="1" width="1.5" height="4" fill="#5a5a40"/><rect x="4" y="1" width="1.5" height="4" fill="#5a5a40"/><path d="M0 5 L4 3 V5 L8 3 V5 L13 3 V9 H0 Z" fill="#7a8a30"/><rect x="0" y="6" width="13" height="3" fill="#6a7a22"/><rect x="0" y="9" width="13" height="6" fill="#a0a098"/><rect x="2" y="11" width="2" height="2" fill="#555"/><rect x="6" y="11" width="2" height="2" fill="#555"/><rect x="10" y="11" width="2" height="2" fill="#555"/></svg>
<svg class="a" style="left:479px;top:218px" width="15" height="15" viewBox="0 0 15 15"><rect x="0.5" y="0.5" width="14" height="14" fill="#eaf4fc" stroke="#9cc0e0"/><circle cx="7.5" cy="5.2" r="2.8" fill="#6a6e78"/><path d="M7 4.5 H10" stroke="#e8eef4" stroke-width="1.4"/><path d="M2.5 14 Q2.5 8.5 7.5 8.5 Q12.5 8.5 12.5 14 Z" fill="#e8904a"/><rect x="1.5" y="6.5" width="2" height="1.2" fill="#111"/><rect x="1" y="9" width="1.5" height="2" fill="#111"/><path d="M1 14 H14" stroke="#4a6a90"/></svg>
<svg class="a" style="left:479px;top:234px" width="15" height="15" viewBox="0 0 15 15"><rect x="0.5" y="0.5" width="14" height="14" fill="#eaf4fc" stroke="#9cc0e0"/><circle cx="7.5" cy="5.2" r="2.8" fill="#6a6e78"/><path d="M7 4.5 H10" stroke="#e8eef4" stroke-width="1.4"/><path d="M2.5 14 Q2.5 8.5 7.5 8.5 Q12.5 8.5 12.5 14 Z" fill="#e8904a"/><rect x="1.5" y="6.5" width="2" height="1.2" fill="#111"/><rect x="1" y="9" width="1.5" height="2" fill="#111"/><path d="M1 14 H14" stroke="#4a6a90"/></svg>
<svg class="a" style="left:479px;top:250px" width="15" height="15" viewBox="0 0 15 15"><rect x="0.5" y="0.5" width="14" height="14" fill="#eaf4fc" stroke="#9cc0e0"/><circle cx="7.5" cy="5.2" r="2.8" fill="#6a6e78"/><path d="M7 4.5 H10" stroke="#e8eef4" stroke-width="1.4"/><path d="M2.5 14 Q2.5 8.5 7.5 8.5 Q12.5 8.5 12.5 14 Z" fill="#e8904a"/><rect x="1.5" y="6.5" width="2" height="1.2" fill="#111"/><rect x="1" y="9" width="1.5" height="2" fill="#111"/><path d="M1 14 H14" stroke="#4a6a90"/></svg>
<svg class="a" style="left:479px;top:266px" width="15" height="15" viewBox="0 0 15 15"><rect x="0.5" y="0.5" width="14" height="14" fill="#eaf4fc" stroke="#9cc0e0"/><circle cx="7.5" cy="5.2" r="2.8" fill="#6a6e78"/><path d="M7 4.5 H10" stroke="#e8eef4" stroke-width="1.4"/><path d="M2.5 14 Q2.5 8.5 7.5 8.5 Q12.5 8.5 12.5 14 Z" fill="#e8904a"/><rect x="1.5" y="6.5" width="2" height="1.2" fill="#111"/><rect x="1" y="9" width="1.5" height="2" fill="#111"/><path d="M1 14 H14" stroke="#4a6a90"/></svg>
<svg class="a" style="left:479px;top:282px" width="15" height="15" viewBox="0 0 15 15"><rect x="0.5" y="0.5" width="14" height="14" fill="#eaf4fc" stroke="#9cc0e0"/><circle cx="7.5" cy="5.2" r="2.8" fill="#6a6e78"/><path d="M7 4.5 H10" stroke="#e8eef4" stroke-width="1.4"/><path d="M2.5 14 Q2.5 8.5 7.5 8.5 Q12.5 8.5 12.5 14 Z" fill="#e8904a"/><rect x="1.5" y="6.5" width="2" height="1.2" fill="#111"/><rect x="1" y="9" width="1.5" height="2" fill="#111"/><path d="M1 14 H14" stroke="#4a6a90"/></svg>
<svg class="a" style="left:479px;top:298px" width="15" height="15" viewBox="0 0 15 15"><rect x="0.5" y="0.5" width="14" height="14" fill="#eaf4fc" stroke="#9cc0e0"/><circle cx="7.5" cy="5.2" r="2.8" fill="#6a6e78"/><path d="M7 4.5 H10" stroke="#e8eef4" stroke-width="1.4"/><path d="M2.5 14 Q2.5 8.5 7.5 8.5 Q12.5 8.5 12.5 14 Z" fill="#e8904a"/><rect x="1.5" y="6.5" width="2" height="1.2" fill="#111"/><rect x="1" y="9" width="1.5" height="2" fill="#111"/><path d="M1 14 H14" stroke="#4a6a90"/></svg>
<svg class="a" style="left:479px;top:314px" width="15" height="15" viewBox="0 0 15 15"><rect x="0.5" y="0.5" width="14" height="14" fill="#eaf4fc" stroke="#9cc0e0"/><circle cx="7.5" cy="5.2" r="2.8" fill="#6a6e78"/><path d="M7 4.5 H10" stroke="#e8eef4" stroke-width="1.4"/><path d="M2.5 14 Q2.5 8.5 7.5 8.5 Q12.5 8.5 12.5 14 Z" fill="#e8904a"/><rect x="1.5" y="6.5" width="2" height="1.2" fill="#111"/><rect x="1" y="9" width="1.5" height="2" fill="#111"/><path d="M1 14 H14" stroke="#4a6a90"/></svg>
<svg class="a" style="left:479px;top:330px" width="15" height="15" viewBox="0 0 15 15"><rect x="0.5" y="0.5" width="14" height="14" fill="#eaf4fc" stroke="#9cc0e0"/><circle cx="7.5" cy="5.2" r="2.8" fill="#6a6e78"/><path d="M7 4.5 H10" stroke="#e8eef4" stroke-width="1.4"/><path d="M2.5 14 Q2.5 8.5 7.5 8.5 Q12.5 8.5 12.5 14 Z" fill="#e8904a"/><rect x="1.5" y="6.5" width="2" height="1.2" fill="#111"/><rect x="1" y="9" width="1.5" height="2" fill="#111"/><path d="M1 14 H14" stroke="#4a6a90"/></svg>
<svg class="a" style="left:443px;top:863px" width="21" height="21" viewBox="0 0 21 21"><circle cx="10.5" cy="10.5" r="10.2" fill="#3d7ab6"/><circle cx="10.5" cy="5.5" r="1.9" fill="#fff"/><rect x="8.9" y="8.5" width="3.2" height="8.5" rx="1" fill="#fff"/></svg>
<div class="a" style="left:479.5px;top:864px;width:1230px;font-size:12px;line-height:15.7px;color:#222;text-align:justify;text-align-last:justify;white-space:nowrap">In questa sezione si definiscono i dati anagrafici degli attori principali (Stazione appaltante, Tecnico CAM, RUP e i Progettisti ina base alla specializzazione). I dati anagrafici possono essere compilati singolarmente anche con il</div>
<div class="a" style="left:479.5px;top:879.7px;width:1230px;font-size:12px;line-height:15.7px;color:#222;text-align:justify;text-align-last:justify;white-space:nowrap">supporto di <b>CloudIO-Sync</b>. E' consigliato di compilare le anagrafiche corrispondenti alle figure presenti e lasciare in bianco quelle di cui non si dispongono i dati anagrafici. Selezionare <b>Nuovo</b> per aggiungere una nuova Figura</div>
<div class="a" style="left:479.5px;top:895.4px;width:1230px;font-size:12px;line-height:15.7px;color:#222;white-space:nowrap">responsabile e successivamente integrare i dati anagrafici.</div>
<div class="a" style="left:736px;top:465px;width:2px;height:2px;background:#7d8da8"></div>
<div class="a" style="left:428px;top:524px;width:2px;height:2px;background:#8a9ab0"></div>
<div class="a" style="left:736px;top:469px;width:2px;height:2px;background:#7d8da8"></div>
<div class="a" style="left:428px;top:528px;width:2px;height:2px;background:#8a9ab0"></div>
<div class="a" style="left:736px;top:473px;width:2px;height:2px;background:#7d8da8"></div>
<div class="a" style="left:428px;top:532px;width:2px;height:2px;background:#8a9ab0"></div>
<div class="a" style="left:736px;top:477px;width:2px;height:2px;background:#7d8da8"></div>
<div class="a" style="left:428px;top:536px;width:2px;height:2px;background:#8a9ab0"></div>
</body></html>
